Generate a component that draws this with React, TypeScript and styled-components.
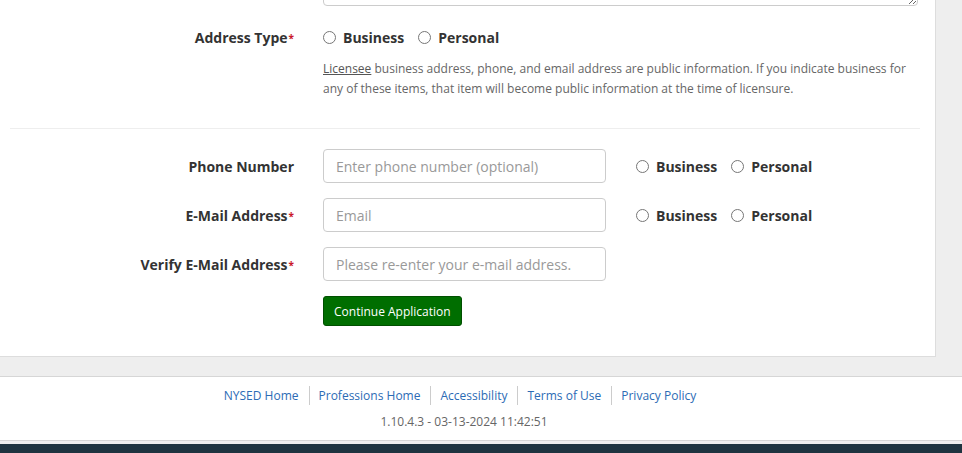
import styled, { createGlobalStyle } from 'styled-components'
import { ReactNode } from 'react'

const GlobalStyle = createGlobalStyle`
  html, body {
    margin: 0;
    padding: 0;
    background: #eeeeee;
    overflow: hidden;
    font-family: "Open Sans", "Liberation Sans", sans-serif;
    color: #333333;
  }
  * {
    box-sizing: border-box;
  }
`

const Page = styled.div`
  width: 962px;
  height: 453px;
  overflow: hidden;
`

const Panel = styled.div`
  width: 936px;
  background: #ffffff;
  border-right: 1px solid #dddddd;
  border-bottom: 1px solid #dddddd;
  padding-bottom: 30px;
`

const TextAreaRow = styled.div`
  margin-top: -60px;
  padding-left: 323px;
  padding-right: 17px;
`

const TextArea = styled.textarea`
  display: block;
  width: 100%;
  height: 66px;
  border: 1px solid #cccccc;
  border-radius: 4px;
  resize: vertical;
`

const Row = styled.div<{ $top?: number; $start?: boolean }>`
  display: flex;
  align-items: ${({ $start }) => ($start ? 'flex-start' : 'center')};
  min-height: ${({ $start }) => ($start ? 0 : 34)}px;
  margin-top: ${({ $top }) => $top ?? 15}px;
`

const Label = styled.label`
  width: 294px;
  flex: none;
  text-align: right;
  font-size: 14px;
  font-weight: 700;
  color: #333333;
  margin-right: 29px;
  white-space: nowrap;
`

const Required = styled.span`
  color: #c9182b;
  font-size: 10px;
  margin-left: 1px;
  position: relative;
  top: -1px;
`

const Content = styled.div`
  display: flex;
  align-items: center;
`

const TextInput = styled.input`
  width: 283px;
  height: 34px;
  border: 1px solid #cccccc;
  border-radius: 4px;
  padding: 0 12px;
  font-family: "Open Sans", "Liberation Sans", sans-serif;
  font-size: 14px;
  color: #555555;
  &::placeholder {
    color: #999999;
  }
`

const RadioGroup = styled.div<{ $left?: number }>`
  display: flex;
  align-items: center;
  margin-left: ${({ $left }) => $left ?? 0}px;
`

const RadioLabel = styled.label`
  display: flex;
  align-items: center;
  font-size: 14px;
  font-weight: 700;
  color: #333333;
  margin-right: 14px;
  input {
    width: 13px;
    height: 13px;
    margin: 0 7px 0 0;
  }
`

const Help = styled.p`
  margin: 5px 17px 0 323px;
  font-size: 12px;
  line-height: 19.5px;
  color: #666666;
  abbr {
    text-decoration: underline;
    color: #555555;
  }
`

const Divider = styled.hr`
  border: 0;
  border-top: 1px solid #eeeeee;
  margin: 30px 15px 20px 10px;
`

const Button = styled.button`
  height: 30px;
  padding: 0 10px;
  background: #006e00;
  border: 1px solid #004f00;
  border-radius: 3px;
  color: #ffffff;
  font-family: "Open Sans", "Liberation Sans", sans-serif;
  font-size: 12px;
`

const Gap = styled.div`
  height: 19px;
`

const Footer = styled.footer`
  background: #ffffff;
  border-top: 1px solid #d6d6d6;
  border-bottom: 1px solid #d6d6d6;
  padding: 9px 34px 9px 0;
  text-align: center;
`

const Links = styled.nav`
  display: flex;
  justify-content: center;
  padding-right: 7px;
`

const FooterLink = styled.a`
  font-size: 12px;
  line-height: 19px;
  color: #2c6bb5;
  text-decoration: none;
  padding: 0 10px 0 9px;
  & + & {
    border-left: 1px solid #cccccc;
  }
`

const Version = styled.div`
  margin-top: 8px;
  font-size: 12px;
  line-height: 18px;
  color: #666666;
`

const DarkBar = styled.div`
  margin-top: 3px;
  height: 10px;
  background: #1f3440;
`

function Radios({ name, left }: { name: string; left?: number }) {
  return (
    <RadioGroup $left={left}>
      <RadioLabel>
        <input type="radio" name={name} />
        Business
      </RadioLabel>
      <RadioLabel>
        <input type="radio" name={name} />
        Personal
      </RadioLabel>
    </RadioGroup>
  )
}

function FieldLabel({ children, required }: { children: ReactNode; required?: boolean }) {
  return (
    <Label>
      {children}
      {required && <Required>*</Required>}
    </Label>
  )
}

export default function App() {
  return (
    <Page>
      <GlobalStyle />
      <Panel>
        <TextAreaRow>
          <TextArea />
        </TextAreaRow>
        <Row $top={14}>
          <FieldLabel required>Address Type</FieldLabel>
          <Radios name="addressType" />
        </Row>
        <Help>
          <abbr>Licensee</abbr> business address, phone, and email address are public information. If you
          indicate business for any of these items, that item will become public information at the time of
          licensure.
        </Help>
        <Divider />
        <Row $top={0}>
          <FieldLabel>Phone Number</FieldLabel>
          <Content>
            <TextInput placeholder="Enter phone number (optional)" />
            <Radios name="phoneType" left={30} />
          </Content>
        </Row>
        <Row>
          <FieldLabel required>E-Mail Address</FieldLabel>
          <Content>
            <TextInput placeholder="Email" />
            <Radios name="emailType" left={30} />
          </Content>
        </Row>
        <Row>
          <FieldLabel required>Verify E-Mail Address</FieldLabel>
          <Content>
            <TextInput placeholder="Please re-enter your e-mail address." />
          </Content>
        </Row>
        <Row $top={15} $start>
          <Label />
          <Button>Continue Application</Button>
        </Row>
      </Panel>
      <Gap />
      <Footer>
        <Links>
          <FooterLink href="#">NYSED Home</FooterLink>
          <FooterLink href="#">Professions Home</FooterLink>
          <FooterLink href="#">Accessibility</FooterLink>
          <FooterLink href="#">Terms of Use</FooterLink>
          <FooterLink href="#">Privacy Policy</FooterLink>
        </Links>
        <Version>1.10.4.3 - 03-13-2024 11:42:51</Version>
      </Footer>
      <DarkBar />
    </Page>
  )
}
